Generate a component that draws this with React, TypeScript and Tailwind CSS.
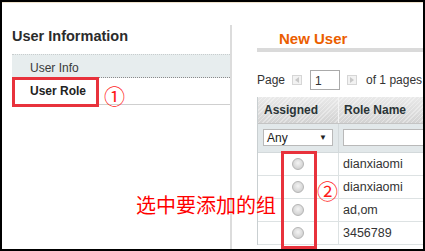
import React from 'react';

const rows = ['dianxiaomi', 'dianxiaomi', 'ad,om', '3456789'];

const Radio: React.FC = () => (
  <span className="block w-[12px] h-[12px] rounded-full border border-[#b5b5b5] bg-[radial-gradient(circle_at_50%_40%,#f4f4f4_0%,#d8d8d8_60%,#c4c4c4_100%)]" />
);

const PagerArrow: React.FC<{ dir: 'left' | 'right' }> = ({ dir }) => (
  <span className="flex items-center justify-center w-[10px] h-[10px] border border-[#d6d6d6] bg-[#f2f2f2]">
    <svg width="4" height="6" viewBox="0 0 4 6">
      {dir === 'left' ? <path d="M4 0 L0 3 L4 6 Z" fill="#c8c8c8" /> : <path d="M0 0 L4 3 L0 6 Z" fill="#c8c8c8" />}
    </svg>
  </span>
);

const App: React.FC = () => {
  return (
    <div className="relative w-[425px] h-[251px] overflow-hidden bg-white border-2 border-black font-['Liberation_Sans',Arial,sans-serif] text-[#2f2f2f]">
      <div className="h-px bg-[#efe2cc]" />
      <div className="flex h-[246px]">
        {/* left: user information tabs */}
        <div className="w-[230px] mt-[22px] pl-[10px] border-r-2 border-[#dcdcdc]">
          <div className="h-[29px] pt-[2px] text-[14.5px] leading-[18px] font-bold text-[#2b2b2b]">User Information</div>
          <div className="h-[24px] pl-[18px] pt-[6px] bg-[#e7edee] border-t border-[#c8cdce] border-b border-dotted border-b-[#8a8a8a] text-[12px] leading-[14px] text-[#3a3a3a]">
            User Info
          </div>
          <div className="h-[27px] pl-[18px] pt-[6px] border-b border-[#cfcfcf] text-[12px] leading-[14px] font-bold text-[#222]">
            User Role
          </div>
        </div>

        {/* right: new user */}
        <div className="flex-1 pl-[25px] overflow-hidden">
          <div className="h-[45px] pt-[27px] pl-[22px] text-[15px] leading-[18px] font-bold text-[#eb5e00]">New User</div>
          <div className="h-[4px] bg-[#dadada]" />
          <div className="flex items-center h-[20px] mt-[18px] text-[12px] text-[#333]">
            <span>Page</span>
            <span className="ml-[7px]"><PagerArrow dir="left" /></span>
            <span className="ml-[8px] w-[30px] h-[20px] border border-[#aaaaaa] pl-[4px] leading-[20px]">1</span>
            <span className="ml-[7px]"><PagerArrow dir="right" /></span>
            <span className="ml-[9px] whitespace-nowrap">of 1 pages</span>
          </div>

          <div className="mt-[7px] w-[260px] border-l border-[#c9cfd1]">
            <div className="grid grid-cols-[81px_1fr] h-[27px] border-b border-[#c4c4c4] bg-[image:repeating-linear-gradient(135deg,rgba(255,255,255,0.35)_0px,rgba(255,255,255,0.35)_1px,transparent_1px,transparent_3px),linear-gradient(#e9e9e9,#dcdcdc_60%,#d2d2d2)] text-[12px] font-bold text-[#2a3436]">
              <div className="flex items-center pl-[6px] border-r border-[#f4f4f4]">Assigned</div>
              <div className="flex items-center pl-[5px]">Role Name</div>
            </div>
            <div className="grid grid-cols-[81px_1fr] h-[29px] bg-[#e2e8ea] border-b border-[#d3d9db]">
              <div className="pl-[5px] pt-[5px] border-r border-[#d3d9db]">
                <div className="flex items-center justify-between w-[70px] h-[17px] bg-white border border-[#b9b9b9] pl-[3px] pr-[5px] text-[12px] text-[#222]">
                  <span>Any</span>
                  <span className="text-[8px]">▼</span>
                </div>
              </div>
              <div className="pl-[4px] pt-[5px]">
                <div className="h-[17px] bg-white border border-[#b9b9b9]" />
              </div>
            </div>
            {rows.map((name, i) => (
              <div key={i} className="grid grid-cols-[81px_1fr] h-[23px] border-b border-[#dde2e3]">
                <div className="flex items-center justify-center border-r border-[#dde2e3]">
                  <Radio />
                </div>
                <div className="flex items-center pl-[4px] text-[12.5px] text-[#333]">{name}</div>
              </div>
            ))}
          </div>
        </div>
      </div>

      {/* annotations */}
      <div className="absolute left-[10px] top-[75px] w-[87px] h-[30px] border-[3px] border-[#e8323c]" />
      <span className="absolute left-[102px] top-[81px] text-[21px] leading-[24px] text-[#ff1a1a] font-['Noto_Sans_CJK_SC',sans-serif]">①</span>
      <div className="absolute left-[279px] top-[149px] w-[36px] h-[98px] border-[3px] border-[#e8323c]" />
      <span className="absolute left-[315px] top-[176px] text-[21px] leading-[24px] text-[#ff1a1a] font-['Noto_Sans_CJK_SC',sans-serif]">②</span>
      <span className="absolute left-[134px] top-[191px] text-[20px] leading-[24px] text-[#ff0000] whitespace-nowrap font-['Noto_Sans_CJK_SC',sans-serif]">选中要添加的组</span>
    </div>
  );
};

export default App;
